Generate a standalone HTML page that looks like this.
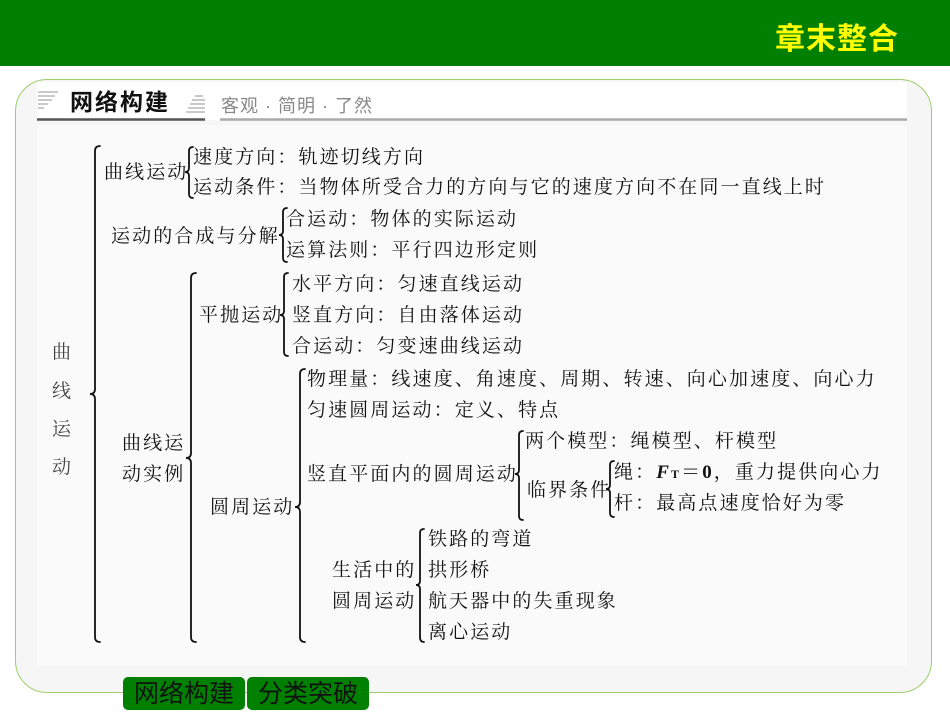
<!DOCTYPE html>
<html><head><meta charset="utf-8"><style>
*{margin:0;padding:0}
body{width:950px;height:713px;position:relative;background:#fff;overflow:hidden;font-family:"Liberation Serif","Noto Serif CJK SC","Noto Sans CJK SC",serif;}
.hdr{position:absolute;left:0;top:0;width:950px;height:66px;background:#007f00}
.hdr span{position:absolute;left:775px;top:14px;font:bold 30px "Liberation Sans","Noto Sans CJK SC",sans-serif;color:#ffff00;letter-spacing:1px}
.panel{position:absolute;left:15px;top:79px;width:915px;height:612px;border:1px solid #9ccf6c;border-radius:32px;background:#f6f6f6}
.inner{position:absolute;left:37px;top:125px;width:870px;height:540px;background:#fafafa}
.top{position:absolute;left:37px;top:82px;width:870px;height:38px;background:#fff}
.t{position:absolute;font-size:19px;line-height:20px;letter-spacing:2.1px;color:#111;white-space:nowrap;font-family:"Liberation Serif","Noto Serif CJK SC",serif}
.tab{position:absolute;top:677px;height:33px;width:122px;background:#008000;border-radius:5px;color:#111;font:25px "Liberation Sans","Noto Sans CJK SC",sans-serif;text-align:center;line-height:34px}
</style></head><body>
<div class="hdr"><span>章末整合</span></div>
<div class="panel"></div>
<div class="top"></div>
<div class="inner"></div>
<svg style="position:absolute;left:0;top:0" width="950" height="713">
<g stroke="#aaa" stroke-width="1.3"><line x1="38" y1="92" x2="58" y2="92"/><line x1="38" y1="96" x2="55" y2="96"/><line x1="38" y1="100" x2="52" y2="100"/><line x1="38" y1="104" x2="48" y2="104"/><line x1="38" y1="108" x2="44" y2="108"/>
<line x1="195" y1="96" x2="203" y2="96"/><line x1="192" y1="100" x2="205" y2="100"/><line x1="190" y1="104" x2="205" y2="104"/><line x1="188" y1="108" x2="205" y2="108"/><line x1="186" y1="112" x2="205" y2="112"/></g>
<line x1="37" y1="119.5" x2="205" y2="119.5" stroke="#555" stroke-width="2.5"/>
<line x1="220" y1="119.5" x2="907" y2="119.5" stroke="#aaa" stroke-width="2.5"/>
<g fill="none" stroke="#111" stroke-width="1.8" stroke-linecap="round">
<path d="M100 146 Q95 146 95 151 L95 389 Q95 394 90 394 Q95 394 95 399 L95 637 Q95 642 100 642"/>
<path d="M193 147 Q189 147 189 151 L189 168 Q189 172 185 172 Q189 172 189 176 L189 194 Q189 198 193 198"/>
<path d="M287 208 Q283 208 283 212 L283 231 Q283 235 279 235 Q283 235 283 239 L283 258 Q283 262 287 262"/>
<path d="M196 273 Q191 273 191 278 L191 453 Q191 458 186 458 Q191 458 191 463 L191 637 Q191 642 196 642"/>
<path d="M288 273 Q284 273 284 277 L284 311 Q284 315 280 315 Q284 315 284 319 L284 352 Q284 356 288 356"/>
<path d="M305 369 Q300 369 300 374 L300 502 Q300 507 295 507 Q300 507 300 512 L300 637 Q300 642 305 642"/>
<path d="M523 431 Q519 431 519 435 L519 470 Q519 474 515 474 Q519 474 519 478 L519 516 Q519 520 523 520"/>
<path d="M614 461 Q610 461 610 465 L610 485 Q610 489 606 489 Q610 489 610 493 L610 513 Q610 517 614 517"/>
<path d="M424 529 Q420 529 420 533 L420 581 Q420 585 416 585 Q420 585 420 589 L420 637 Q420 642 424 642"/>
</g>
</svg>
<div class="t" style="left:70px;top:89px;font-size:23px;font-weight:bold;line-height:26px;letter-spacing:2px;font-family:'Liberation Sans','Noto Sans CJK SC',sans-serif">网络构建</div>
<div class="t" style="left:221px;top:96px;font-size:18px;color:#888;letter-spacing:1px;font-family:'Liberation Sans','Noto Sans CJK SC',sans-serif">客观 · 简明 · 了然</div>
<div class="t" style="left:52px;top:343px;color:#444">曲</div>
<div class="t" style="left:52px;top:382px;color:#444">线</div>
<div class="t" style="left:52px;top:420px;color:#444">运</div>
<div class="t" style="left:52px;top:458px;color:#444">动</div>
<div class="t" style="left:104px;top:163px">曲线运动</div>
<div class="t" style="left:193px;top:148px">速度方向：轨迹切线方向</div>
<div class="t" style="left:193px;top:178px">运动条件：当物体所受合力的方向与它的速度方向不在同一直线上时</div>
<div class="t" style="left:111px;top:227px">运动的合成与分解</div>
<div class="t" style="left:286px;top:210px">合运动：物体的实际运动</div>
<div class="t" style="left:286px;top:241px">运算法则：平行四边形定则</div>
<div class="t" style="left:122px;top:434px">曲线运</div>
<div class="t" style="left:122px;top:465px">动实例</div>
<div class="t" style="left:199px;top:306px">平抛运动</div>
<div class="t" style="left:292px;top:275px">水平方向：匀速直线运动</div>
<div class="t" style="left:292px;top:306px">竖直方向：自由落体运动</div>
<div class="t" style="left:292px;top:337px">合运动：匀变速曲线运动</div>
<div class="t" style="left:210px;top:498px">圆周运动</div>
<div class="t" style="left:307px;top:370px">物理量：线速度、角速度、周期、转速、向心加速度、向心力</div>
<div class="t" style="left:307px;top:401px">匀速圆周运动：定义、特点</div>
<div class="t" style="left:307px;top:465px">竖直平面内的圆周运动</div>
<div class="t" style="left:525px;top:432px">两个模型：绳模型、杆模型</div>
<div class="t" style="left:527px;top:481px">临界条件</div>
<div class="t" style="left:614px;top:463px">绳：<b><i>F</i><span style="font-size:12px">T</span>＝0</b>，重力提供向心力</div>
<div class="t" style="left:614px;top:494px">杆：最高点速度恰好为零</div>
<div class="t" style="left:332px;top:561px">生活中的</div>
<div class="t" style="left:332px;top:592px">圆周运动</div>
<div class="t" style="left:428px;top:530px">铁路的弯道</div>
<div class="t" style="left:428px;top:561px">拱形桥</div>
<div class="t" style="left:428px;top:592px">航天器中的失重现象</div>
<div class="t" style="left:428px;top:623px">离心运动</div>
<div class="tab" style="left:123px">网络构建</div>
<div class="tab" style="left:247px">分类突破</div>
</body></html>
